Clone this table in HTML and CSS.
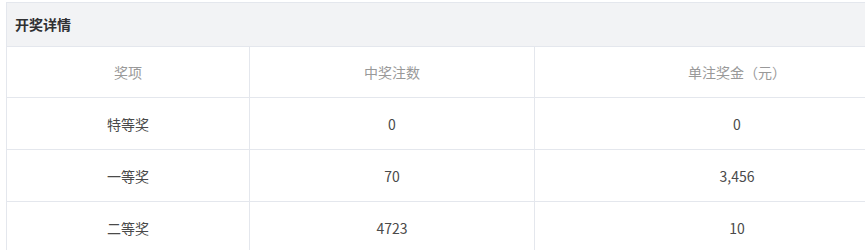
FILE: index.html
```html
<!DOCTYPE html>
<html lang="zh">
<head>
<meta charset="utf-8">
<link rel="stylesheet" href="styles.css">
</head>
<body>
<div class="panel">
  <div class="panel-head">开奖详情</div>
  <div class="grid">
    <div class="cell th">奖项</div>
    <div class="cell th">中奖注数</div>
    <div class="cell th">单注奖金（元）</div>
    <div class="cell">特等奖</div>
    <div class="cell">0</div>
    <div class="cell">0</div>
    <div class="cell">一等奖</div>
    <div class="cell">70</div>
    <div class="cell">3,456</div>
    <div class="cell">二等奖</div>
    <div class="cell">4723</div>
    <div class="cell">10</div>
  </div>
</div>
</body>
</html>
```
FILE: styles.css
```css
html, body {
  margin: 0;
  padding: 0;
  overflow: hidden;
  background: #fff;
}
body {
  font-family: "Noto Sans CJK SC", "Noto Sans", sans-serif;
  font-size: 14px;
}
.panel {
  margin: 2px 0 0 6px;
  border: 1px solid #e4e7ed;
  border-right: none;
  overflow: hidden;
}
.panel-head {
  height: 43px;
  line-height: 43px;
  padding-left: 8px;
  background: #f2f3f5;
  border-bottom: 1px solid #e4e7ed;
  font-weight: bold;
  color: #303133;
  font-size: 14px;
}
.grid {
  display: grid;
  grid-template-columns: 243px 285px 404px;
  grid-template-rows: 51px;
  grid-auto-rows: 52px;
}
.cell {
  display: flex;
  align-items: center;
  justify-content: center;
  border-right: 1px solid #e4e7ed;
  border-bottom: 1px solid #e4e7ed;
  color: #4a4a4a;
}
.grid .cell:nth-child(3n) {
  border-right: none;
}
.th {
  color: #999;
}
```
